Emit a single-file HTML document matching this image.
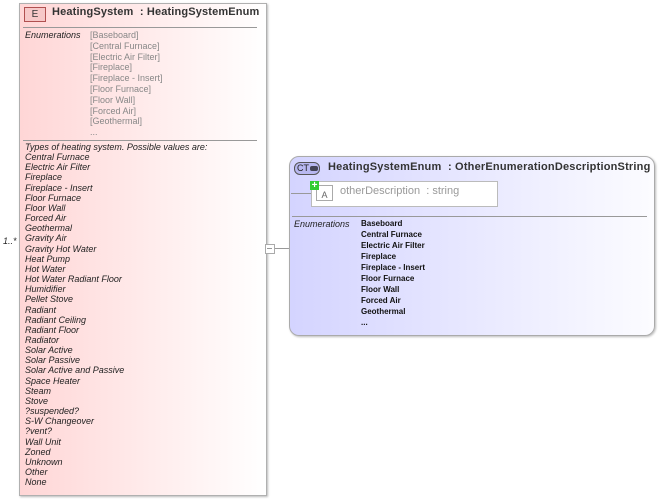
<!DOCTYPE html>
<html><head><style>
body{margin:0;width:659px;height:499px;background:#fff;position:relative;font-family:"Liberation Sans",sans-serif;overflow:hidden}
.a{position:absolute}
.box1{left:19px;top:3px;width:246px;height:491px;border:1px solid #b0b0b0;background:linear-gradient(to right,#ffd6d6,#fff);box-shadow:1px 1px 2px #bbb}
.t{font-size:9px;line-height:10px;white-space:nowrap}
.i{font-style:italic;color:#222}
.g{color:#888}
.box2{left:289px;top:156px;width:364px;height:178px;border:1px solid #aaa;border-radius:10px;background:linear-gradient(to right,#d4d4ff,#fcfcff);box-shadow:1px 1px 2px #bbb}
.b{font-weight:bold;color:#111;font-size:8px;line-height:11px}
</style></head><body>
<div class="a box1"></div>
<div class="a" style="left:24px;top:7px;width:20px;height:13px;border:1px solid #b05050;background:#f6c8c8;font-size:10px;text-align:center;line-height:13px;color:#333">E</div>
<div class="a" style="left:52px;top:6px;font-size:11px;font-weight:bold;color:#333;white-space:nowrap;letter-spacing:0.15px">HeatingSystem&nbsp; : HeatingSystemEnum</div>
<div class="a" style="left:23px;top:27px;width:234px;border-top:1px solid #999"></div>
<div class="a t i" style="left:25px;top:30px">Enumerations</div>
<div class="a t g" style="left:90px;top:30px;line-height:10.8px">[Baseboard]<br>[Central Furnace]<br>[Electric Air Filter]<br>[Fireplace]<br>[Fireplace - Insert]<br>[Floor Furnace]<br>[Floor Wall]<br>[Forced Air]<br>[Geothermal]<br>...</div>
<div class="a" style="left:23px;top:140px;width:234px;border-top:1px solid #999"></div>
<div class="a t i" style="left:25px;top:142px;line-height:10.15px">Types of heating system. Possible values are:<br>Central Furnace<br>Electric Air Filter<br>Fireplace<br>Fireplace - Insert<br>Floor Furnace<br>Floor Wall<br>Forced Air<br>Geothermal<br>Gravity Air<br>Gravity Hot Water<br>Heat Pump<br>Hot Water<br>Hot Water Radiant Floor<br>Humidifier<br>Pellet Stove<br>Radiant<br>Radiant Ceiling<br>Radiant Floor<br>Radiator<br>Solar Active<br>Solar Passive<br>Solar Active and Passive<br>Space Heater<br>Steam<br>Stove<br>?suspended?<br>S-W Changeover<br>?vent?<br>Wall Unit<br>Zoned<br>Unknown<br>Other<br>None</div>
<div class="a t i" style="left:3px;top:236px">1..*</div>
<div class="a" style="left:265px;top:244px;width:8px;height:8px;border:1px solid #aaa;background:#fff"></div>
<div class="a" style="left:267px;top:248px;width:5px;border-top:1px solid #999"></div>
<div class="a" style="left:275px;top:248px;width:14px;border-top:1px solid #999"></div>
<div class="a box2"></div>
<div class="a" style="left:294px;top:162px;width:26px;height:13px;border:1px solid #555;border-radius:6px;background:#b8b8f0;box-sizing:border-box"></div>
<div class="a" style="left:297px;top:163px;font-size:9px;line-height:11px;color:#222">CT</div>
<div class="a" style="left:310px;top:166px;width:8px;height:5px;background:#445;border-radius:2px"></div>
<div class="a" style="left:328px;top:161px;font-size:11px;font-weight:bold;color:#333;white-space:nowrap;letter-spacing:0.2px">HeatingSystemEnum&nbsp; : OtherEnumerationDescriptionString</div>
<div class="a" style="left:291px;top:193px;width:20px;border-top:1px solid #999"></div>
<div class="a" style="left:311px;top:181px;width:185px;height:24px;border:1px solid #bbb;background:#fff"></div>
<div class="a" style="left:316px;top:185px;width:15px;height:14px;border:1px solid #aaa;font-size:9px;color:#666;text-align:center;line-height:18px">A</div>
<div class="a" style="left:310px;top:181px;width:9px;height:9px;background:#3c3;color:#fff;font-size:10px;line-height:9px;text-align:center;font-weight:bold">+</div>
<div class="a" style="left:340px;top:185px;font-size:11px;color:#999;white-space:nowrap">otherDescription&nbsp; : string</div>
<div class="a" style="left:292px;top:216px;width:355px;border-top:1px solid #999"></div>
<div class="a t i" style="left:294px;top:219px">Enumerations</div>
<div class="a b" style="left:361px;top:218px;white-space:nowrap">Baseboard<br>Central Furnace<br>Electric Air Filter<br>Fireplace<br>Fireplace - Insert<br>Floor Furnace<br>Floor Wall<br>Forced Air<br>Geothermal<br>...</div>
</body></html>
